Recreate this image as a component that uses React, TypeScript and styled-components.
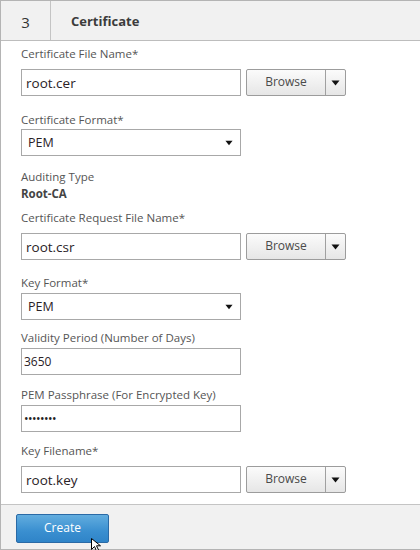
import * as React from 'react';
import styled, { createGlobalStyle } from 'styled-components';

const GlobalStyle = createGlobalStyle`
  html, body {
    margin: 0;
    padding: 0;
    background: #fff;
  }
  body {
    font-family: "Open Sans", "Noto Sans", "Liberation Sans", sans-serif;
    color: #444;
  }
`

const Panel = styled.div`
  position: relative;
  width: 420px;
  height: 550px;
  box-sizing: border-box;
  border-left: 1px solid #b4b4b4;
  border-top: 1px solid #b4b4b4;
  display: flex;
  flex-direction: column;
  overflow: hidden;
`

const Header = styled.div`
  display: flex;
  height: 39px;
  background: #f1f1f1;
  border-bottom: 1px solid #bdbdbd;
  flex-shrink: 0;
`

const StepNo = styled.div`
  width: 50px;
  border-right: 1px solid #c4c4c4;
  display: flex;
  align-items: center;
  justify-content: center;
  font-size: 15px;
  color: #333;
  padding-top: 2px;
  box-sizing: border-box;
`

const Title = styled.div`
  display: flex;
  align-items: center;
  padding-left: 20px;
  font-size: 13px;
  font-weight: 700;
  color: #3c3c3c;
  padding-top: 1px;
`

const Body = styled.div`
  flex: 1;
  min-height: 0;
  padding: 5px 0 0 20px;
  display: flex;
  flex-direction: column;
`

const Field = styled.div<{ $top: number }>`
  margin-top: ${p => p.$top}px;
  display: flex;
  flex-direction: column;
`

const Label = styled.div<{ $gap?: number }>`
  font-size: 11.5px;
  line-height: 16px;
  color: #555;
  margin-bottom: ${p => p.$gap ?? 2}px;
`

const Value = styled.div`
  font-size: 11.5px;
  line-height: 17px;
  font-weight: 700;
  color: #444;
`

const Row = styled.div`
  display: flex;
  align-items: center;
  gap: 5px;
`

const TextBox = styled.div<{ $big?: boolean }>`
  width: 220px;
  height: 27px;
  box-sizing: border-box;
  border: 1px solid #a8a8a8;
  background: #fff;
  display: flex;
  align-items: center;
  padding-left: ${p => (p.$big ? 4 : 2)}px;
  font-size: ${p => (p.$big ? 13.5 : 12)}px;
  color: #2a2226;
`

const Dots = styled.span`
  font-size: 12px;
  letter-spacing: -0.5px;
  color: #222;
`

const SelectBox = styled(TextBox)`
  justify-content: space-between;
  padding: 0 7px 0 6px;
  font-size: 12.5px;
`

const BrowseGroup = styled.div`
  display: flex;
  height: 27px;
  box-sizing: border-box;
  border: 1px solid #9c9c9c;
  border-radius: 2px;
  background: linear-gradient(#fbfbfb, #e6e6e6);
  overflow: hidden;
`

const BrowseBtn = styled.div`
  width: 79px;
  display: flex;
  align-items: center;
  justify-content: center;
  font-size: 12px;
  color: #4a4a4a;
  padding-bottom: 2px;
  box-sizing: border-box;
  border-right: 1px solid #a0a0a0;
`

const ArrowBtn = styled.div`
  width: 19px;
  display: flex;
  align-items: center;
  justify-content: center;
`

const Footer = styled.div`
  height: 46px;
  box-sizing: border-box;
  background: #f1f1f1;
  border-top: 1px solid #c4c4c4;
  border-bottom: 1px solid #b4b4b4;
  padding: 9px 0 0 15px;
  flex-shrink: 0;
`

const CreateButton = styled.button`
  width: 93px;
  height: 29px;
  border: 1px solid #2a6aa6;
  border-radius: 2px;
  background: linear-gradient(#62addf, #3a8fd0 60%, #2f84c8);
  color: #fff;
  font-family: inherit;
  font-size: 12px;
  padding: 0 0 2px;
  cursor: pointer;
`

const Cursor = styled.svg`
  position: absolute;
  left: 90px;
  top: 537px;
`

const Caret = ({ w = 9 }: { w?: number }) => (
  <svg width={w} height={Math.round(w * 0.7)} viewBox="0 0 9 6">
    <path d="M0.5 0.5h8L4.5 5.5z" fill="#111" />
  </svg>
)

type FileFieldProps = { label: string; value: string; top: number }

const FileField = ({ label, value, top }: FileFieldProps) => (
  <Field $top={top}>
    <Label $gap={7}>{label}</Label>
    <Row>
      <TextBox $big>{value}</TextBox>
      <BrowseGroup>
        <BrowseBtn>Browse</BrowseBtn>
        <ArrowBtn><Caret /></ArrowBtn>
      </BrowseGroup>
    </Row>
  </Field>
)

export default function App() {
  return (
    <>
      <GlobalStyle />
      <Panel>
        <Header>
          <StepNo>3</StepNo>
          <Title>Certificate</Title>
        </Header>
        <Body>
          <FileField top={0} label="Certificate File Name*" value="root.cer" />
          <Field $top={16}>
            <Label $gap={1}>Certificate Format*</Label>
            <SelectBox>PEM <Caret w={8} /></SelectBox>
          </Field>
          <Field $top={13}>
            <Label $gap={0}>Auditing Type</Label>
            <Value>Root-CA</Value>
          </Field>
          <FileField top={8} label="Certificate Request File Name*" value="root.csr" />
          <Field $top={15}>
            <Label $gap={2}>Key Format*</Label>
            <SelectBox>PEM <Caret w={8} /></SelectBox>
          </Field>
          <Field $top={10}>
            <Label $gap={2}>Validity Period (Number of Days)</Label>
            <TextBox>3650</TextBox>
          </Field>
          <Field $top={12}>
            <Label $gap={2}>PEM Passphrase (For Encrypted Key)</Label>
            <TextBox><Dots>••••••••</Dots></TextBox>
          </Field>
          <FileField top={11} label="Key Filename*" value="root.key" />
        </Body>
        <Footer>
          <CreateButton>Create</CreateButton>
        </Footer>
        <Cursor width="14" height="14" viewBox="0 0 14 14">
          <path d="M0.5 0.5v11l3-3 2 4.5 2-1-2-4.2h4z" fill="#fff" stroke="#000" strokeWidth="1" strokeLinejoin="round" />
        </Cursor>
      </Panel>
    </>
  )
}
